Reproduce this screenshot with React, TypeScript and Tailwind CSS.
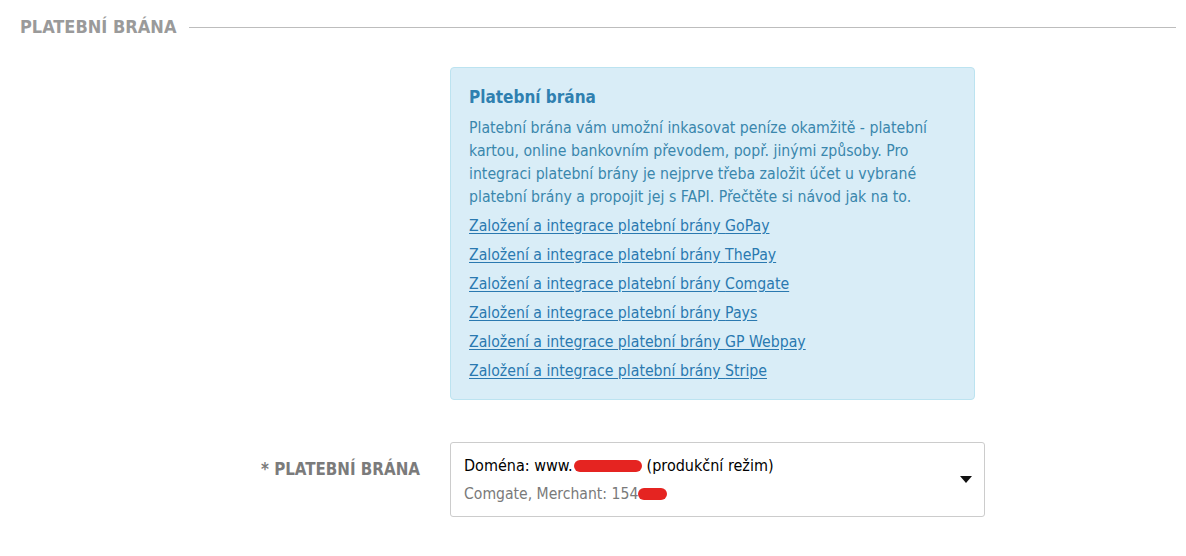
// Payment gateway settings section (Czech admin form)

const links = ['GoPay', 'ThePay', 'Comgate', 'Pays', 'GP Webpay', 'Stripe']

export default function App() {
  return (
    <div
      className="min-h-screen bg-white px-5 pt-[16px]"
      style={{ fontFamily: '"DejaVu Sans Condensed", "DejaVu Sans", Tahoma, sans-serif' }}
    >
      {/* ── Section heading ───────────────────────────────────────── */}
      <div className="flex items-center gap-[13px]">
        <h2 className="text-[18px] font-bold leading-[22px] text-[#9a9a9a] whitespace-nowrap">
          PLATEBNÍ BRÁNA
        </h2>
        <div className="-mr-[10px] h-px flex-1 bg-[#bdbdbd]" />
      </div>

      {/* ── Info box ──────────────────────────────────────────────── */}
      <div className="mt-[29px] flex">
        <div className="w-[430px] shrink-0" />
        <div className="w-[525px] rounded-[4px] border border-[#bce3f0] bg-[#d9edf7] px-[18px] pt-[18px] pb-[14px] text-[#3a87ad]">
          <h3 className="text-[17px] font-bold leading-[22px] text-[#2f80b0]">Platební brána</h3>
          <p className="mt-[8px] text-[15.7px] leading-[23px]">
            Platební brána vám umožní inkasovat peníze okamžitě - platební kartou, online
            bankovním převodem, popř. jinými způsoby. Pro integraci platební brány je nejprve
            třeba založit účet u vybrané platební brány a propojit jej s FAPI. Přečtěte si
            návod jak na to.
          </p>
          <ul className="mt-[3px] flex flex-col">
            {links.map((name) => (
              <li key={name} className="h-[29px] text-[15.7px] leading-[29px]">
                <a href="#" className="text-[#2a79b0] underline underline-offset-2">
                  Založení a integrace platební brány {name}
                </a>
              </li>
            ))}
          </ul>
        </div>
      </div>

      {/* ── Gateway select ────────────────────────────────────────── */}
      <div className="mt-[42px] flex items-start">
        <label className="w-[400px] shrink-0 pt-[17px] text-right text-[16.8px] font-bold leading-[20px] text-[#7b7b7b]">
          * PLATEBNÍ BRÁNA
        </label>
        <div className="ml-[30px] flex h-[75px] w-[535px] items-center rounded-[3px] border border-[#cccccc] bg-white pl-[13px] pr-[12px]">
          <div className="flex-1">
            <div className="flex items-center text-[16px] leading-[22px] text-black">
              <span>Doména: www.</span>
              <span className="ml-[1px] h-[12px] w-[68px] rounded-full bg-[#e52421]" />
              <span className="ml-[5px]">(produkční režim)</span>
            </div>
            <div className="mt-[7px] flex items-center text-[15.6px] leading-[20px] text-[#7a7a7a]">
              <span>Comgate, Merchant: 154</span>
              <span className="h-[12px] w-[29px] rounded-full bg-[#e52421]" />
            </div>
          </div>
          <svg width="12" height="7" viewBox="0 0 12 7" className="shrink-0">
            <path d="M0 0h12L6 7z" fill="#111" />
          </svg>
        </div>
      </div>
    </div>
  )
}
